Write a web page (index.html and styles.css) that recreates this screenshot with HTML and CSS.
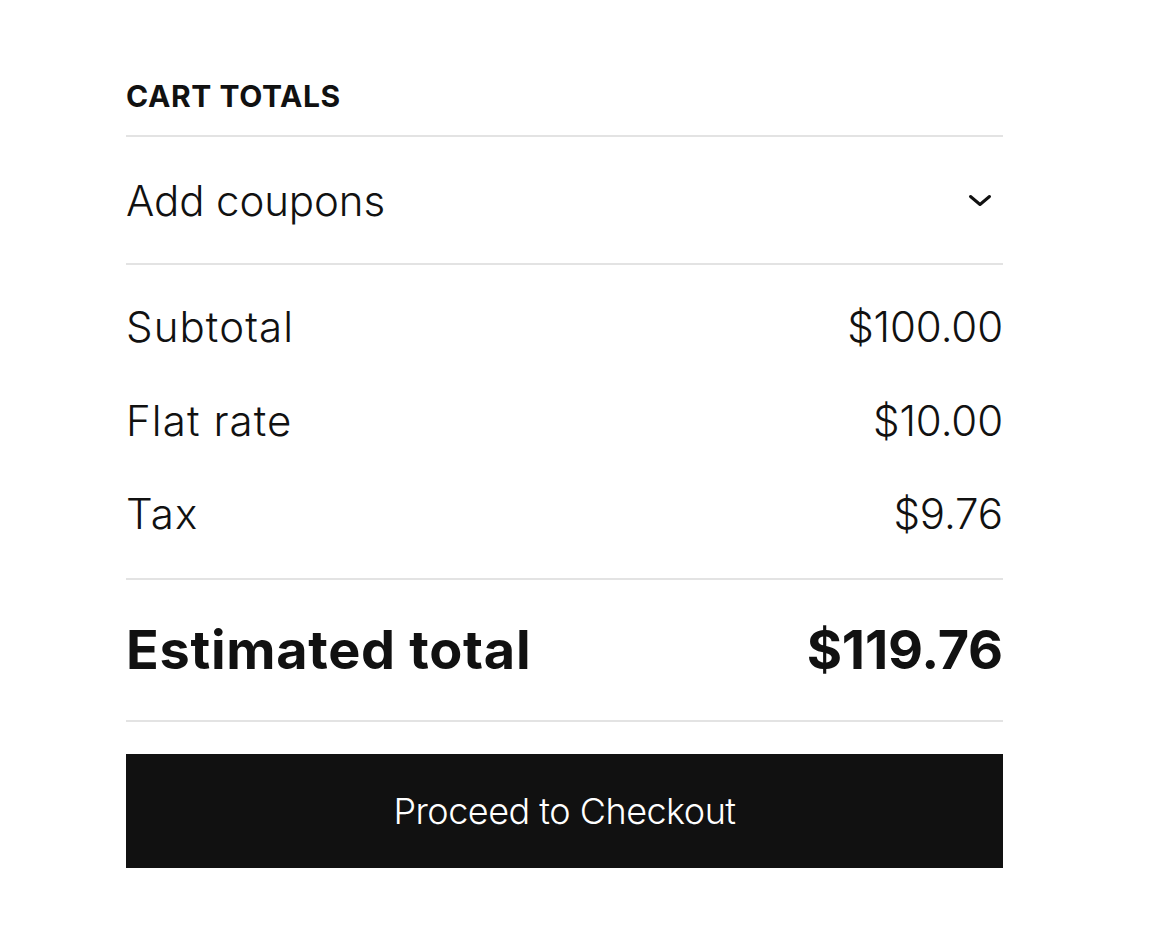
FILE: index.html
```html
<!DOCTYPE html>
<html>
<head>
<meta charset="utf-8">
<link rel="stylesheet" href="styles.css">
</head>
<body>
<div class="cart">
  <h2 class="title">CART TOTALS</h2>
  <div class="coupons">
    <span>Add coupons</span>
    <svg class="chev" width="24" height="13" viewBox="0 0 24 13"><path d="M2.5 2.5l9.5 8 9.5-8" fill="none" stroke="#111" stroke-width="3" stroke-linecap="round" stroke-linejoin="round"/></svg>
  </div>
  <div class="lines">
    <div class="row"><span class="label">Subtotal</span><span class="value">$100.00</span></div>
    <div class="row"><span class="label">Flat rate</span><span class="value">$10.00</span></div>
    <div class="row"><span class="label">Tax</span><span class="value">$9.76</span></div>
  </div>
  <div class="total"><span class="label">Estimated total</span><span class="value">$119.76</span></div>
  <button class="checkout">Proceed to Checkout</button>
</div>
</body>
</html>
```
FILE: styles.css
```css
body {
  margin: 0;
  background: #fff;
  color: #111;
  font-family: Inter, "Noto Sans", sans-serif;
}
.cart {
  width: 877px;
  margin-left: 126px;
  padding-top: 76px;
}
.title {
  margin: 0;
  font-size: 30px;
  font-weight: 700;
  letter-spacing: 0.6px;
  line-height: 40px;
  padding-bottom: 19px;
  border-bottom: 2px solid #e3e3e3;
}
.coupons {
  display: flex;
  justify-content: space-between;
  align-items: center;
  height: 126px;
  font-size: 42px;
  font-weight: 300;
  letter-spacing: -0.1px;
  border-bottom: 2px solid #e3e3e3;
}
.chev {
  margin-right: 11px;
}
.lines {
  padding: 15px 0 17px;
  border-bottom: 2px solid #e3e3e3;
}
.row {
  display: flex;
  justify-content: space-between;
  align-items: center;
  height: 93.5px;
  font-size: 42px;
  font-weight: 300;
}
.row .label {
  letter-spacing: 1.1px;
}
.row .value {
  letter-spacing: -0.1px;
}
.total {
  display: flex;
  justify-content: space-between;
  align-items: center;
  height: 140px;
  font-size: 54px;
  font-weight: 700;
  border-bottom: 2px solid #e3e3e3;
}
.total .label {
  letter-spacing: 0.7px;
}
.total .value {
  letter-spacing: -0.2px;
}
.checkout {
  display: block;
  width: 100%;
  height: 114px;
  margin-top: 32px;
  background: #111;
  color: #fff;
  border: 0;
  font-family: Inter, "Noto Sans", sans-serif;
  font-size: 36px;
  font-weight: 300;
  letter-spacing: -0.5px;
}
```
